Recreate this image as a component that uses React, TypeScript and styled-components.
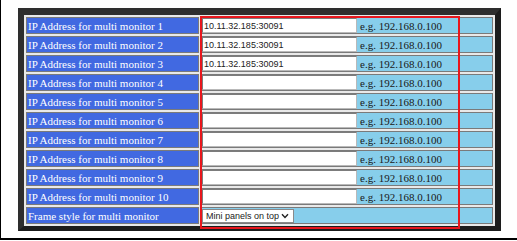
import React from 'react';
import styled, { createGlobalStyle } from 'styled-components';

const GlobalStyle = createGlobalStyle`
  html, body {
    margin: 0;
    padding: 0;
    background: #ffffff;
  }
`;

const Page = styled.div`
  position: relative;
  box-sizing: border-box;
  width: 517px;
  height: 240px;
  padding: 8px 0 0 17px;
  border-left: 1px solid #000;
  border-bottom: 2px solid #000;
  background: #fff;
`;

const Frame = styled.div`
  box-sizing: border-box;
  width: 483px;
  padding: 2px;
  background: #e9e9e9;
  border-style: solid;
  border-width: 7px 6px 5px 6px;
  border-color: #2e2e2e #1c1c1c #1c1c1c #2e2e2e;
`;

const Grid = styled.div`
  display: grid;
  grid-template-columns: 173px 292px;
  grid-auto-rows: 17px;
  gap: 2px;
`;

const Cell = styled.div`
  box-sizing: border-box;
  display: flex;
  align-items: center;
  border: 1px solid #7a7a7a;
  font-family: 'Liberation Serif', 'Times New Roman', serif;
  font-size: 11px;
  white-space: nowrap;
`;

const LabelCell = styled(Cell)`
  background: #4169e1;
  color: #ffffff;
  padding-left: 1px;
`;

const ValueCell = styled(Cell)`
  background: #87ceeb;
  color: #1a1a1a;
  gap: 3px;
`;

const TextInput = styled.input`
  box-sizing: border-box;
  width: 155px;
  height: 15px;
  margin: 0;
  padding: 0 1px;
  border: 1px solid;
  border-color: #7c7c7c #b9b9b9 #b9b9b9 #7c7c7c;
  background: #fff;
  font-family: 'Liberation Sans', Arial, sans-serif;
  font-size: 9px;
  color: #222;
  outline: none;
`;

const SelectWrap = styled.div`
  position: relative;
  display: inline-flex;
`;

const Select = styled.select`
  box-sizing: border-box;
  appearance: none;
  width: 92px;
  height: 14px;
  margin: 0;
  padding: 0 0 0 3px;
  border: 1px solid #8a8a8a;
  border-radius: 0;
  background: #fff;
  font-family: 'Liberation Sans', Arial, sans-serif;
  font-size: 9px;
  color: #222;
  outline: none;
`;

const Chevron = styled.svg`
  position: absolute;
  right: 5px;
  top: 4px;
  pointer-events: none;
`;

const Highlight = styled.div`
  position: absolute;
  left: 199px;
  top: 16px;
  width: 260px;
  height: 213px;
  box-sizing: border-box;
  border: 2px solid #e8161c;
  pointer-events: none;
`;

const presets = ['10.11.32.185:30091', '10.11.32.185:30091', '10.11.32.185:30091'];

export default function App() {
  const rows = Array.from({ length: 10 }, (_, i) => i + 1);

  return (
    <>
      <GlobalStyle />
      <Page>
        <Frame>
          <Grid>
            {rows.map((n) => (
              <React.Fragment key={n}>
                <LabelCell>IP Address for multi monitor {n}</LabelCell>
                <ValueCell>
                  <TextInput defaultValue={presets[n - 1] ?? ''} />
                  <span>e.g. 192.168.0.100</span>
                </ValueCell>
              </React.Fragment>
            ))}
            <LabelCell>Frame style for multi monitor</LabelCell>
            <ValueCell>
              <SelectWrap>
                <Select defaultValue="top">
                  <option value="top">Mini panels on top</option>
                  <option value="bottom">Mini panels on bottom</option>
                </Select>
                <Chevron width="8" height="6" viewBox="0 0 8 6">
                  <path d="M1 1.2 L4 4.4 L7 1.2" fill="none" stroke="#222" strokeWidth="1.4" />
                </Chevron>
              </SelectWrap>
            </ValueCell>
          </Grid>
        </Frame>
        <Highlight />
      </Page>
    </>
  );
}
